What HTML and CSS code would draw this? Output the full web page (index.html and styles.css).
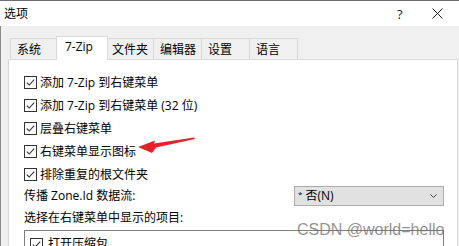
FILE: index.html
```html
<!DOCTYPE html>
<html lang="zh-CN">

<head>
  <meta charset="UTF-8" />
  <title>选项</title>
  <link rel="stylesheet" href="styles.css">
</head>

<body>
  <div class="window">
    <div class="titlebar">
      <span class="title">选项</span>
      <span class="help">?</span>
      <span class="close">
        <svg width="11" height="11" viewBox="0 0 11 11">
          <path d="M0.5 0.5 L10.5 10.5 M10.5 0.5 L0.5 10.5" stroke="#1a1a1a" stroke-width="1" fill="none" />
        </svg>
      </span>
    </div>

    <div class="client">
      <div class="tabs">
        <div class="tab first">系统</div>
        <div class="tab active">7-Zip</div>
        <div class="tab">文件夹</div>
        <div class="tab">编辑器</div>
        <div class="tab">设置</div>
        <div class="tab">语言</div>
      </div>

      <div class="panel">
        <div class="opt">
          <svg class="cb" width="13" height="13" viewBox="0 0 13 13"><rect x="0.5" y="0.5" width="12" height="12" fill="#fff" stroke="#333" /><path d="M2.8 6.6 L5.2 9 L10.2 3.6" stroke="#333" stroke-width="1.1" fill="none" /></svg>
          <span>添加 7-Zip 到右键菜单</span>
        </div>
        <div class="opt">
          <svg class="cb" width="13" height="13" viewBox="0 0 13 13"><rect x="0.5" y="0.5" width="12" height="12" fill="#fff" stroke="#333" /><path d="M2.8 6.6 L5.2 9 L10.2 3.6" stroke="#333" stroke-width="1.1" fill="none" /></svg>
          <span>添加 7-Zip 到右键菜单 (32 位)</span>
        </div>
        <div class="opt">
          <svg class="cb" width="13" height="13" viewBox="0 0 13 13"><rect x="0.5" y="0.5" width="12" height="12" fill="#fff" stroke="#333" /><path d="M2.8 6.6 L5.2 9 L10.2 3.6" stroke="#333" stroke-width="1.1" fill="none" /></svg>
          <span>层叠右键菜单</span>
        </div>
        <div class="opt">
          <svg class="cb" width="13" height="13" viewBox="0 0 13 13"><rect x="0.5" y="0.5" width="12" height="12" fill="#fff" stroke="#333" /><path d="M2.8 6.6 L5.2 9 L10.2 3.6" stroke="#333" stroke-width="1.1" fill="none" /></svg>
          <span>右键菜单显示图标</span>
        </div>
        <div class="opt">
          <svg class="cb" width="13" height="13" viewBox="0 0 13 13"><rect x="0.5" y="0.5" width="12" height="12" fill="#fff" stroke="#333" /><path d="M2.8 6.6 L5.2 9 L10.2 3.6" stroke="#333" stroke-width="1.1" fill="none" /></svg>
          <span>排除重复的根文件夹</span>
        </div>

        <div class="zone-row">
          <span>传播 Zone.Id 数据流:</span>
          <div class="select">
            <span class="star">*</span><span>否(N)</span>
            <svg class="chevron" width="7" height="4" viewBox="0 0 7 4"><path d="M0.5 0.5 L3.5 3.5 L6.5 0.5" stroke="#444" stroke-width="1" fill="none" /></svg>
          </div>
        </div>

        <div class="list-label">选择在右键菜单中显示的项目:</div>

        <div class="list">
          <div class="list-item">
            <svg class="cb" width="13" height="13" viewBox="0 0 13 13"><rect x="0.5" y="0.5" width="12" height="12" fill="#fff" stroke="#333" /><path d="M2.8 6.6 L5.2 9 L10.2 3.6" stroke="#333" stroke-width="1.1" fill="none" /></svg>
            <span>打开压缩包</span>
          </div>
        </div>
      </div>
    </div>

    <!-- annotation on top of the screenshot -->
    <svg class="arrow" width="459" height="246" viewBox="0 0 459 246">
      <polygon points="138,146 155,139.5 154,142.5 194,136.5 195,138 156,146.5 152,152" fill="#e8202a" />
    </svg>
    <div class="watermark">CSDN @world=hello</div>
  </div>
</body>

</html>
```

FILE: styles.css
```css
* {
  box-sizing: border-box;
}

body {
  margin: 0;
  font-family: "Open Sans", "Noto Sans CJK SC", sans-serif;
  font-size: 12px;
  line-height: 16px;
  color: #000;
  background: #f0f0f0;
}

.window {
  position: relative;
  width: 459px;
  height: 246px;
  overflow: hidden;
  border-top: 1px solid #6f6f6f;
  background: #f0f0f0;
}

.titlebar {
  display: flex;
  align-items: center;
  height: 25px;
  background: #fff;
  padding-left: 4px;
}

.title {
  font-size: 12px;
}

.help {
  margin-left: auto;
  width: 8px;
  font-size: 13px;
  color: #1a1a1a;
}

.close {
  display: flex;
  margin-left: 27px;
  margin-right: 16px;
}

.client {
  height: 220px;
  border-left: 1px solid #8c8c8c;
}

.tabs {
  display: flex;
  align-items: flex-end;
  height: 33px;
  padding-left: 9px;
}

.tab {
  width: 48px;
  height: 21px;
  padding: 5px 0 0 6px;
  line-height: 12px;
  background: #f0f0f0;
  border: 1px solid #d9d9d9;
  border-left: none;
  border-bottom: none;
  white-space: nowrap;
}

.tab.first {
  border-left: 1px solid #d9d9d9;
}

.tab.active {
  position: relative;
  z-index: 1;
  width: 52px;
  height: 24px;
  margin: 0 -2px -1px -2px;
  padding: 4px 0 0 8px;
  background: #fff;
  border-left: 1px solid #d9d9d9;
}

.panel {
  width: 450px;
  height: 200px;
  margin-left: 7px;
  padding: 11px 13px 0 15px;
  background: #fff;
  border: 1px solid #d9d9d9;
}

.opt {
  display: flex;
  align-items: center;
  gap: 3px;
  height: 23px;
}

.cb {
  flex: none;
}

.zone-row {
  display: flex;
  align-items: center;
  height: 20px;
}

.select {
  display: flex;
  align-items: center;
  width: 150px;
  height: 20px;
  margin-left: auto;
  padding: 0 6px 0 3px;
  background: #e1e1e1;
  border: 1px solid #adadad;
}

.star {
  font-size: 8px;
  line-height: 8px;
  align-self: flex-start;
  margin-top: 3px;
  margin-right: 3px;
}

.chevron {
  margin-left: auto;
}

.list-label {
  display: flex;
  align-items: center;
  height: 24px;
}

.list {
  height: 40px;
  padding: 5px 0 0 5px;
  border: 1px solid #7f7f7f;
}

.list-item {
  display: flex;
  align-items: center;
  gap: 5px;
}

.arrow {
  position: absolute;
  left: 0;
  top: 0;
  pointer-events: none;
}

.watermark {
  position: absolute;
  left: 297px;
  top: 221px;
  font-family: "Liberation Sans", sans-serif;
  font-size: 16px;
  line-height: 16px;
  color: rgba(110, 110, 110, 0.75);
  white-space: nowrap;
}
```
